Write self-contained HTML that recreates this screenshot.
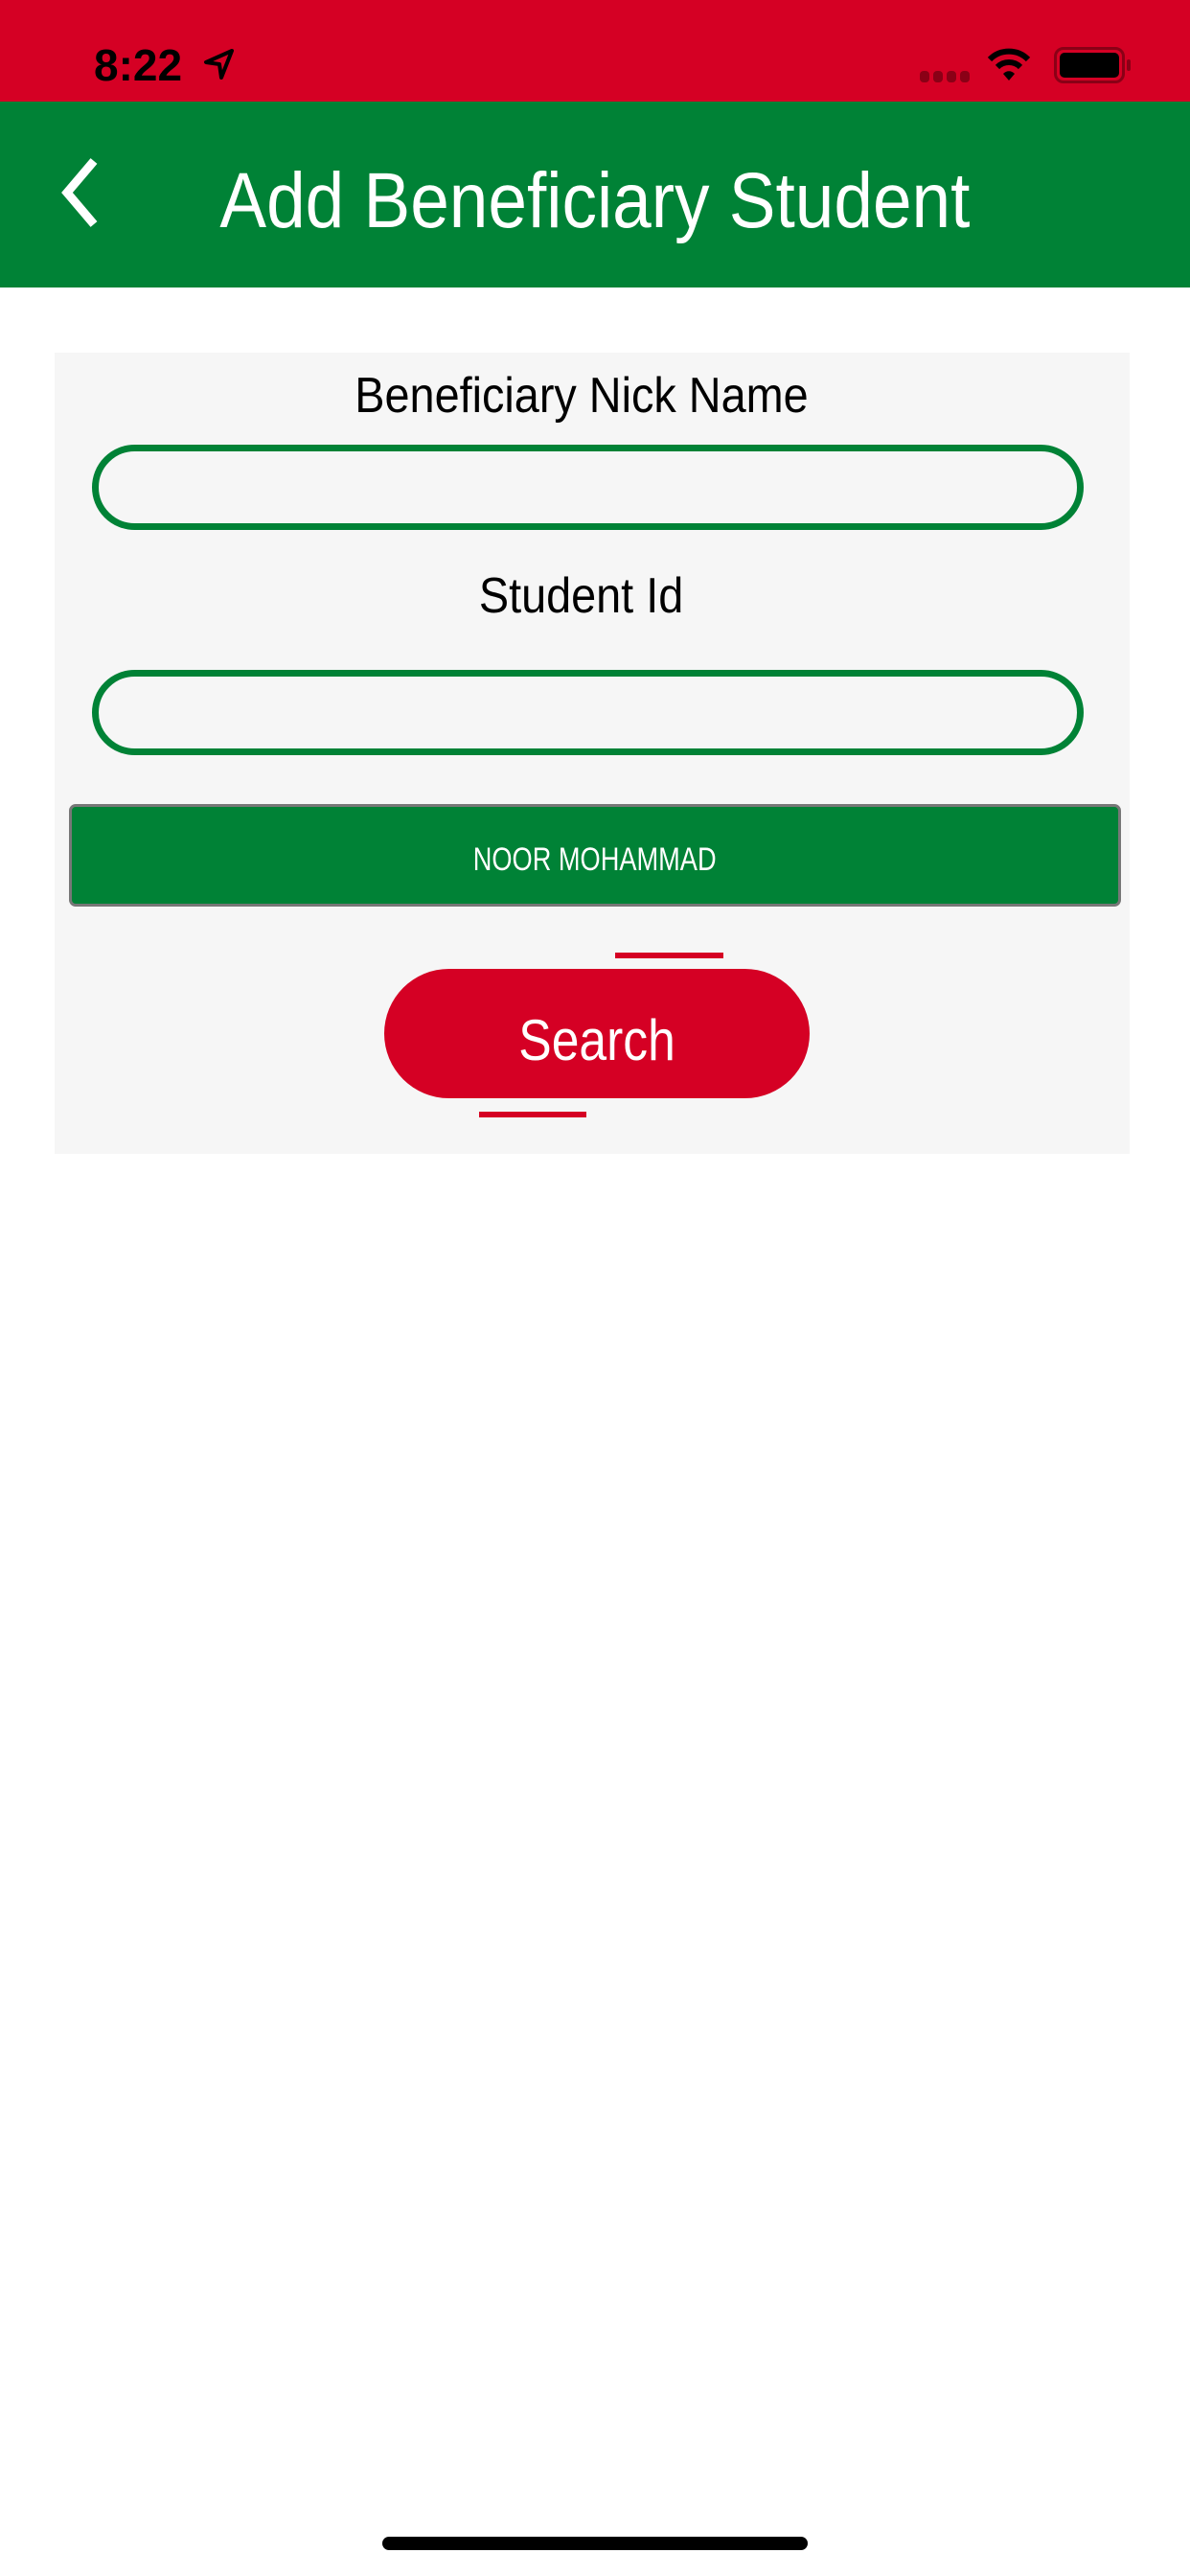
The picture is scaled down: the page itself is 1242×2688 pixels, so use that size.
<!DOCTYPE html>
<html><head><meta charset="utf-8"><style>
*{margin:0;padding:0;box-sizing:border-box}
body{width:1242px;height:2688px;background:#fff;position:relative;overflow:hidden;font-family:"Liberation Sans",sans-serif}
.a{position:absolute}
.c{display:flex;align-items:center;justify-content:center}
.n{display:inline-block;transform:scaleX(0.78)}
</style></head><body>
<div class="a" style="left:0;top:0;width:1242px;height:106px;background:#d50024"></div>
<div class="a" style="left:98px;top:40px;font-size:46px;font-weight:bold;color:#000;line-height:56px">8:22</div>
<svg class="a" style="left:212px;top:50px" width="34" height="34" viewBox="0 0 34 34"><path d="M30 3 L3 15 L17 17 L19 31 Z" fill="none" stroke="#000" stroke-width="4" stroke-linejoin="round"/></svg>
<div class="a" style="left:960px;top:74px;width:56px;height:12px">
<div class="a" style="left:0;width:10px;height:12px;border-radius:4px;background:#8a0016"></div>
<div class="a" style="left:14px;width:10px;height:12px;border-radius:4px;background:#8a0016"></div>
<div class="a" style="left:28px;width:10px;height:12px;border-radius:4px;background:#8a0016"></div>
<div class="a" style="left:42px;width:10px;height:12px;border-radius:4px;background:#8a0016"></div></div>
<svg class="a" style="left:1030px;top:48px" width="46" height="38" viewBox="0 0 46 38"><path d="M3 14 A28 28 0 0 1 43 14" fill="none" stroke="#000" stroke-width="6"/><path d="M11 22 A17 17 0 0 1 35 22" fill="none" stroke="#000" stroke-width="6"/><path d="M17 29 L23 36 L29 29 A8 8 0 0 0 17 29Z" fill="#000"/></svg>
<div class="a" style="left:1100px;top:49px;width:74px;height:38px;border:3px solid #8a0016;border-radius:10px;padding:3px"><div style="width:100%;height:100%;background:#000;border-radius:5px"></div></div>
<div class="a" style="left:1176px;top:62px;width:4px;height:12px;background:#8a0016;border-radius:2px"></div>
<div class="a" style="left:0;top:106px;width:1242px;height:194px;background:#008236"></div>
<svg class="a" style="left:60px;top:164px" width="46" height="74" viewBox="0 0 46 74"><path d="M38 4 L10 37 L38 70" fill="none" stroke="#fff" stroke-width="9"/></svg>
<div class="a c" style="left:0;top:160px;width:1242px;height:100px;color:#fff;font-size:82px"><span class="n" style="transform:scaleX(0.89)">Add Beneficiary Student</span></div>
<div class="a" style="left:57px;top:368px;width:1122px;height:836px;background:#f6f6f6"></div>
<div class="a c" style="left:57px;top:383px;width:1100px;height:60px;font-size:52px;color:#000"><span class="n" style="transform:scaleX(0.9)">Beneficiary Nick Name</span></div>
<div class="a" style="left:96px;top:464px;width:1035px;height:89px;border:7px solid #008236;border-radius:45px"></div>
<div class="a c" style="left:57px;top:592px;width:1100px;height:60px;font-size:52px;color:#000"><span class="n" style="transform:scaleX(0.9)">Student Id</span></div>
<div class="a" style="left:96px;top:699px;width:1035px;height:89px;border:7px solid #008236;border-radius:45px"></div>
<div class="a c" style="left:72px;top:839px;width:1098px;height:107px;background:#008236;border:3px solid #777;border-radius:7px;color:#fff;font-size:34px;padding-top:10px"><span class="n" style="transform:scaleX(0.8)">NOOR MOHAMMAD</span></div>
<div class="a" style="left:642px;top:994px;width:113px;height:6px;background:#d50024"></div>
<div class="a c" style="left:401px;top:1011px;width:444px;height:135px;background:#d50024;border-radius:68px;color:#fff;font-size:60px;padding-top:14px"><span class="n" style="transform:scaleX(0.86)">Search</span></div>
<div class="a" style="left:500px;top:1160px;width:112px;height:6px;background:#d50024"></div>
<div class="a" style="left:399px;top:2647px;width:444px;height:14px;background:#000;border-radius:7px"></div>
</body></html>
